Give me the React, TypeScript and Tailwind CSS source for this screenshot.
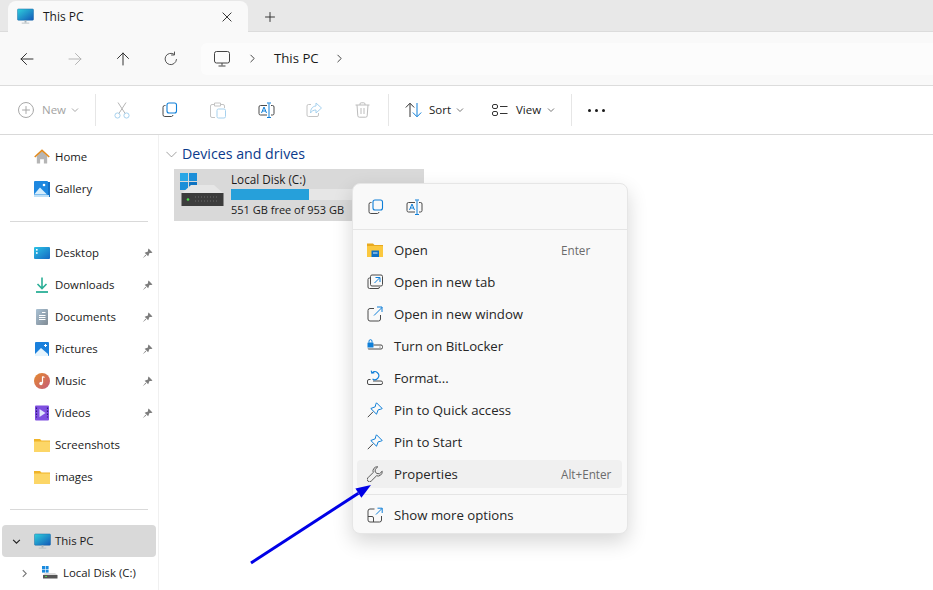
import React from "react";

const font = { fontFamily: '"Open Sans", "Noto Sans", sans-serif' };

const Monitor = ({ s = 18 }: { s?: number }) => (
  <svg width={s} height={s} viewBox="0 0 18 18">
    <defs>
      <linearGradient id="mon" x1="0" y1="0" x2="1" y2="1">
        <stop offset="0" stopColor="#2fd0dc" />
        <stop offset="1" stopColor="#1257b8" />
      </linearGradient>
    </defs>
    <rect x="0.5" y="1" width="17" height="12" rx="1" fill="url(#mon)" stroke="#1a6aa8" strokeWidth="0.5" />
    <rect x="8" y="13" width="2" height="2.5" fill="#a9b4ba" />
    <rect x="5" y="15.5" width="8" height="1" fill="#b8c0c4" />
  </svg>
);

const Line = ({ d, c = "#1a1a1a", s = 16, w = 1 }: { d: string; c?: string; s?: number; w?: number }) => (
  <svg width={s} height={s} viewBox="0 0 16 16" fill="none" stroke={c} strokeWidth={w} strokeLinecap="round" strokeLinejoin="round">
    <path d={d} />
  </svg>
);

const Chev = ({ c = "#777", s = 8 }: { c?: string; s?: number }) => (
  <svg width={s} height={s} viewBox="0 0 8 8" fill="none" stroke={c} strokeWidth="1">
    <path d="M1 2.5 L4 5.5 L7 2.5" />
  </svg>
);

const Copy = () => (
  <svg width="16" height="16" viewBox="0 0 16 16" fill="none">
    <path d="M3.5 3.5 H2.8 A1.8 1.8 0 0 0 1 5.3 V12.7 A1.8 1.8 0 0 0 2.8 14.5 H9.5 A1.8 1.8 0 0 0 11 13" stroke="#4a4a4a" />
    <rect x="5" y="1" width="9.5" height="10" rx="2" stroke="#0f7fd8" strokeWidth="1.1" />
  </svg>
);

const Rename = () => (
  <svg width="17" height="17" viewBox="0 0 17 17" fill="none">
    <path d="M9 3.5 H2.5 A1.5 1.5 0 0 0 1 5 V11.5 A1.5 1.5 0 0 0 2.5 13 H9 M13 3.5 H14.5 A1.5 1.5 0 0 1 16 5 V11.5 A1.5 1.5 0 0 1 14.5 13 H13" stroke="#4a4a4a" />
    <path d="M11 1.5 V15 M9 1 H13 M9 15.5 H13" stroke="#0f7fd8" />
    <path d="M3.5 11 L6 5 L8.5 11 M4.3 9 H7.7" stroke="#0f7fd8" />
  </svg>
);

const Pin = () => (
  <svg width="11" height="11" viewBox="0 0 10 10">
    <path d="M6 0.5 L9.5 4 L8.5 4.5 L6.8 4.6 L5.6 7.6 L2.4 4.4 L5.4 3.2 L5.5 1.5 Z M3.2 6.2 L0.6 9.4 L3.8 6.8 Z" fill="#7d7d7d" />
  </svg>
);

const Folder = () => (
  <svg width="16" height="14" viewBox="0 0 16 14">
    <path d="M0 1 H6 L7.5 2.5 H16 V13 A1 1 0 0 1 15 14 H1 A1 1 0 0 1 0 13 Z" fill="#f0b429" />
    <rect x="0" y="3.5" width="16" height="10.5" rx="0.5" fill="#fcd667" />
  </svg>
);

const sideIcons: Record<string, React.ReactNode> = {
  Home: (
    <svg width="17" height="16" viewBox="0 0 17 16">
      <path d="M3 7 L8.5 2 L14 7 V15 H10.5 V10.5 H6.5 V15 H3 Z" fill="#b5b5b5" />
      <path d="M0.8 8 L8.5 1 L16.2 8" fill="none" stroke="#e08a1e" strokeWidth="1.7" />
    </svg>
  ),
  Gallery: (
    <svg width="16" height="16" viewBox="0 0 16 16">
      <rect x="14" y="1" width="2" height="15" fill="#1570c4" />
      <rect x="0" y="0" width="14" height="14.5" rx="1" fill="#1e88e0" />
      <path d="M0 13.5 L6 6.5 L13 13.5 Z" fill="#d7eefc" />
      <circle cx="10" cy="4" r="1.3" fill="#fff" />
      <rect x="0" y="14" width="15" height="2" fill="#bfe0f6" />
    </svg>
  ),
  Desktop: (
    <svg width="16" height="12" viewBox="0 0 16 12">
      <defs>
        <linearGradient id="desk" x1="0" y1="0" x2="1" y2="1">
          <stop offset="0" stopColor="#2cc3e6" />
          <stop offset="1" stopColor="#1467c2" />
        </linearGradient>
      </defs>
      <rect width="16" height="12" rx="1" fill="url(#desk)" />
      <rect x="2" y="2" width="1.6" height="1.6" fill="#fff" />
      <rect x="2" y="5.2" width="1.6" height="1.6" fill="#fff" />
    </svg>
  ),
  Downloads: (
    <svg width="14" height="16" viewBox="0 0 14 16" fill="none" stroke="#2baf97" strokeWidth="1.6">
      <path d="M7 0.5 V11 M2.5 7 L7 11.5 L11.5 7" />
      <path d="M1 15 H13" strokeWidth="1.8" />
    </svg>
  ),
  Documents: (
    <svg width="12" height="16" viewBox="0 0 12 16">
      <defs>
        <linearGradient id="docs" x1="0" y1="0" x2="1" y2="1">
          <stop offset="0" stopColor="#a9c1d4" />
          <stop offset="1" stopColor="#808b94" />
        </linearGradient>
      </defs>
      <rect width="12" height="16" rx="1" fill="url(#docs)" />
      <path d="M6 3.5 H9.5 M3 6.5 H9.5 M3 8.5 H9.5 M3 10.5 H9.5" stroke="#fff" />
    </svg>
  ),
  Pictures: (
    <svg width="14" height="14" viewBox="0 0 14 14">
      <rect width="14" height="14" rx="1" fill="#1a80dc" />
      <path d="M0 12 L6 6 L13 12 V14 H0 Z" fill="#e6f4fd" />
      <path d="M10.5 2 v3 M9 3.5 h3" stroke="#fff" />
    </svg>
  ),
  Music: (
    <svg width="16" height="16" viewBox="0 0 16 16">
      <defs>
        <linearGradient id="mus" x1="0" y1="0" x2="1" y2="1">
          <stop offset="0" stopColor="#e58a2e" />
          <stop offset="1" stopColor="#c55a7a" />
        </linearGradient>
      </defs>
      <circle cx="8" cy="8" r="8" fill="url(#mus)" />
      <path d="M8.5 3.5 L10.5 4.5 M8.5 3.5 V10" stroke="#fff" strokeWidth="1.2" />
      <circle cx="7" cy="10.5" r="1.7" fill="#fff" />
    </svg>
  ),
  Videos: (
    <svg width="14" height="16" viewBox="0 0 14 16">
      <rect width="14" height="15" y="0.5" rx="1" fill="#7e4fe0" />
      <path d="M4.5 4 L10.5 8 L4.5 12 Z" fill="#dfe6fb" />
      <path d="M1.5 2.5 v10 M12.5 2.5 v10" stroke="#2d1a78" strokeWidth="1.2" strokeDasharray="1.5 1.5" />
    </svg>
  ),
  Screenshots: <Folder />,
  images: <Folder />,
};

const SideRow = ({ name, pin }: { name: string; pin?: boolean }) => (
  <div className="flex h-8 items-center text-[11.4px] text-[#1a1a1a]">
    <div className="ml-[34px] flex w-4 justify-center">{sideIcons[name]}</div>
    <span className="ml-[5px]">{name}</span>
    {pin && (
      <span className="ml-auto mr-[5px] flex">
        <Pin />
      </span>
    )}
  </div>
);

const WinLogo = ({ s = 17 }: { s?: number }) => (
  <svg width={s} height={s} viewBox="0 0 17 17">
    <rect width="8" height="8" fill="#28a6e6" />
    <rect x="9" width="8" height="8" fill="#1b8ed8" />
    <rect y="9" width="8" height="8" fill="#1b8ed8" />
    <rect x="9" y="9" width="8" height="8" fill="#0f74c2" />
  </svg>
);

const menuIcons = {
  open: (
    <svg width="16" height="14" viewBox="0 0 16 14">
      <path d="M0 0.5 H6 L7.5 2 H16 V13 A1 1 0 0 1 15 14 H1 A1 1 0 0 1 0 13 Z" fill="#e8a91f" />
      <rect x="0" y="3" width="16" height="11" rx="0.5" fill="#fbc83f" />
      <rect x="4.5" y="7.5" width="7.5" height="6.5" fill="#0f70c4" />
      <rect x="6" y="9.5" width="4.5" height="1" fill="#d9edfb" />
    </svg>
  ),
  tab: (
    <svg width="16" height="16" viewBox="0 0 16 16" fill="none">
      <rect x="3.5" y="1" width="12" height="11" rx="1.5" stroke="#4a4a4a" />
      <path d="M3 4 H2.5 A1.5 1.5 0 0 0 1 5.5 V13 A1.5 1.5 0 0 0 2.5 14.5 H11 A1.5 1.5 0 0 0 12.5 13" stroke="#4a4a4a" />
      <path d="M7.5 9 L12.5 4 M8.5 3.5 H13 V8" stroke="#0f7fd8" />
    </svg>
  ),
  window: (
    <svg width="16" height="16" viewBox="0 0 16 16" fill="none">
      <path d="M7 2.5 H3 A2 2 0 0 0 1 4.5 V13 A2 2 0 0 0 3 15 H11.5 A2 2 0 0 0 13.5 13 V9" stroke="#4a4a4a" />
      <path d="M7 9.5 L15 1.5 M10 1 H15 V6" stroke="#0f7fd8" />
    </svg>
  ),
  bit: (
    <svg width="16" height="16" viewBox="0 0 16 16" fill="none">
      <rect x="0.5" y="4.5" width="6" height="5" rx="0.5" fill="#0f7fd8" />
      <path d="M2 4.5 V3.2 A1.5 1.5 0 0 1 5 3.2 V4.5" stroke="#0f7fd8" />
      <path d="M6.5 7 H14 A1.5 1.5 0 0 1 15.5 8.5 V9.5 A1.5 1.5 0 0 1 14 11 H2 A1.5 1.5 0 0 1 0.8 10.4" stroke="#4a4a4a" />
      <circle cx="13" cy="9" r="0.6" fill="#4a4a4a" />
    </svg>
  ),
  format: (
    <svg width="16" height="16" viewBox="0 0 16 16" fill="none">
      <path d="M3.5 9.5 H2 A1.5 1.5 0 0 0 0.5 11 V13 A1.5 1.5 0 0 0 2 14.5 H14 A1.5 1.5 0 0 0 15.5 13 V12.5 A1.5 1.5 0 0 0 14 11 H6" stroke="#4a4a4a" />
      <path d="M5 2.8 A4 4 0 1 1 5.5 9 M4.2 0.6 L4.8 3.2 L7.4 2.6" stroke="#0f7fd8" strokeWidth="1.1" />
    </svg>
  ),
  pin: (
    <svg width="16" height="16" viewBox="0 0 16 16" fill="none">
      <path d="M9.5 0.8 L15.2 6.5 L13.8 7.2 L11.2 7.8 L9.5 12.2 L3.8 6.5 L8.2 4.8 L8.8 2.2 Z" stroke="#0f7fd8" />
      <path d="M6 9.8 L0.8 15.2" stroke="#4a4a4a" />
    </svg>
  ),
  wrench: (
    <svg width="16" height="16" viewBox="0 0 16 16" fill="none" stroke="#5a5a5a">
      <path d="M10.8 0.8 A4.3 4.3 0 0 0 6.2 6.5 L0.9 11.8 A2.3 2.3 0 0 0 4.2 15.1 L9.5 9.8 A4.3 4.3 0 0 0 15.2 5.2 L12.5 7.8 L10 7.5 L8.2 6 L8.2 3.4 Z" />
    </svg>
  ),
  more: (
    <svg width="16" height="16" viewBox="0 0 16 16" fill="none">
      <path d="M7.5 2 H3 A2 2 0 0 0 1 4 V13 A2 2 0 0 0 3 15 H12.5 A2 2 0 0 0 14.5 13 V9 M1 9.5 H5 A1.5 1.5 0 0 1 6.5 11 V15" stroke="#4a4a4a" />
      <path d="M9 7.5 L15 1.5 M10.5 1.2 H15.2 V6" stroke="#0f7fd8" />
    </svg>
  ),
};

const MenuItem = ({ icon, label, kbd, hl }: { icon: React.ReactNode; label: string; kbd?: string; hl?: boolean }) => (
  <div className="ml-[4px] mr-[5px] flex h-8 items-center">
    <div className={`flex h-7 w-full items-center rounded ${hl ? "bg-[#f0f0f0]" : ""}`}>
      <div className="ml-[10px] flex w-4 justify-center">{icon}</div>
      <span className="ml-[11px] mt-px text-[13.2px] text-[#262626]">{label}</span>
      {kbd && <span className="ml-auto mt-px w-[61px] shrink-0 text-[11.7px] text-[#6b6b6b]">{kbd}</span>}
    </div>
  </div>
);

const ToolBtn = ({ children }: { children: React.ReactNode }) => (
  <div className="flex h-8 w-12 items-center justify-center">{children}</div>
);

const Sep = () => <div className="h-8 w-px bg-[#e6e6e6]" />;

function ToolIcon({ children }: { children: React.ReactNode }) {
  return <div className="flex w-[17px] items-center justify-center">{children}</div>;
}

export default function App() {
  return (
    <div style={font} className="relative flex h-[590px] w-full flex-col overflow-hidden bg-white">
      {/* Tab strip */}
      <div className="flex h-8 shrink-0 items-end border-b border-[#dcdcdc] bg-[#e8e8e8] pl-2">
        <div className="-mb-px flex h-[31px] w-[240px] items-center rounded-t-lg bg-[#f9f9f9] pl-[9px]">
          <Monitor s={17} />
          <span className="ml-[9px] text-[12px] text-[#1a1a1a]">This PC</span>
          <span className="ml-auto mr-[15px]">
            <Line s={12} d="M2.5 2.5 L13.5 13.5 M13.5 2.5 L2.5 13.5" c="#333" w={1.3} />
          </span>
        </div>
        <div className="mb-[8px] ml-4 flex w-[12px] items-center">
          <Line s={12} d="M8 2 V14 M2 8 H14" c="#333" w={1.3} />
        </div>
      </div>

      {/* Address row */}
      <div className="flex h-[54px] shrink-0 items-center border-b border-[#dcdcdc] bg-[#f9f9f9] pl-[3px]">
        <ToolBtn><Line d="M14 8 H2 M7.5 2.5 L2 8 L7.5 13.5" c="#333" /></ToolBtn>
        <ToolBtn><Line d="M2 8 H14 M8.5 2.5 L14 8 L8.5 13.5" c="#b5b5b5" /></ToolBtn>
        <ToolBtn><Line d="M8 14 V2 M2.5 7.5 L8 2 L13.5 7.5" c="#333" /></ToolBtn>
        <ToolBtn><Line d="M13.5 8.5 A5.7 5.7 0 1 1 11 3.2 M11.5 1 V4 H8.5" c="#555" /></ToolBtn>
        <div className="ml-[6px] flex h-8 flex-1 items-center rounded-l-md bg-[#fcfcfc] pl-[13px] text-[13.2px] text-[#1a1a1a]">
          <svg width="16" height="16" viewBox="0 0 16 16" fill="none" stroke="#444">
            <rect x="0.5" y="0.5" width="15" height="11.5" rx="2" />
            <path d="M8 12 V14.5 M4.5 15 H11.5" />
          </svg>
          <span className="ml-[18px] flex"><Line s={9} d="M5 2 L11 8 L5 14" c="#333" w={1.6} /></span>
          <span className="ml-[17px]">This PC</span>
          <span className="ml-[16px] flex"><Line s={9} d="M5 2 L11 8 L5 14" c="#333" w={1.6} /></span>
        </div>
      </div>

      {/* Command bar */}
      <div className="flex h-[49px] shrink-0 items-center border-b border-[#d9d9d9] bg-white">
        <div className="flex w-[95px] items-center pl-[18px]">
          <Line d="M8 4.5 V11.5 M4.5 8 H11.5 M15.5 8 A7.5 7.5 0 1 1 0.5 8 A7.5 7.5 0 1 1 15.5 8" c="#a8a8a8" />
          <span className="ml-2 text-[11.5px] text-[#a3a3a3]">New</span>
          <span className="ml-[5px]"><Chev c="#a8a8a8" /></span>
        </div>
        <Sep />
        <div className="ml-[2px] flex">
          <ToolBtn>
            <svg width="16" height="17" viewBox="0 0 16 17" fill="none" stroke="#a6d1ee">
              <circle cx="3.5" cy="13.5" r="2.6" />
              <circle cx="12.5" cy="13.5" r="2.6" />
              <path d="M5 11.3 L12 0.5 M11 11.3 L4 0.5" stroke="#b5b5b5" />
            </svg>
          </ToolBtn>
          <ToolBtn><Copy /></ToolBtn>
          <ToolBtn>
            <svg width="16" height="17" viewBox="0 0 16 17" fill="none">
              <path d="M4 2.5 H2 A1.5 1.5 0 0 0 0.5 4 V14 A1.5 1.5 0 0 0 2 15.5 H5 M11 2.5 H13 A1.5 1.5 0 0 1 14.5 4 V6 M4.5 1 H10.5 V4 H4.5 Z" stroke="#c4c4c4" />
              <rect x="7" y="7" width="8.5" height="9" rx="1.5" stroke="#a6d1ee" />
            </svg>
          </ToolBtn>
          <ToolBtn><Rename /></ToolBtn>
          <ToolBtn>
            <svg width="16" height="16" viewBox="0 0 16 16" fill="none">
              <path d="M5 2.5 H2.5 A1.5 1.5 0 0 0 1 4 V13 A1.5 1.5 0 0 0 2.5 14.5 H11 A1.5 1.5 0 0 0 12.5 13 V11" stroke="#c4c4c4" />
              <path d="M10 1 L15.5 6 L10 11 V8 C7.5 8 5.5 9 4.5 11 C4.5 7 6.5 4.2 10 4 Z" stroke="#a6d1ee" />
            </svg>
          </ToolBtn>
          <ToolBtn>
            <svg width="15" height="16" viewBox="0 0 15 16" fill="none" stroke="#bcbcbc">
              <path d="M0.5 3 H14.5 M5 3 V2 A1.2 1.2 0 0 1 6.2 0.8 H8.8 A1.2 1.2 0 0 1 10 2 V3 M2 3 L2.8 13.8 A1.5 1.5 0 0 0 4.3 15.2 H10.7 A1.5 1.5 0 0 0 12.2 13.8 L13 3 M6 6 V12 M9 6 V12" />
            </svg>
          </ToolBtn>
        </div>
        <div className="ml-[2px]"><Sep /></div>
        <div className="ml-4 flex w-[66px] items-center text-[11.5px] text-[#1a1a1a]">
          <svg width="17" height="16" viewBox="0 0 17 16" fill="none">
            <path d="M5 15 V1.5 M0.8 5.5 L5 1.2 L9.2 5.5" stroke="#333" />
            <path d="M12 1 V14.5 M7.8 10.5 L12 14.8 L16.2 10.5" stroke="#0f7fd8" />
          </svg>
          <span className="ml-[7px]">Sort</span>
          <span className="ml-[5px]"><Chev /></span>
        </div>
        <div className="ml-[21px] flex w-[79px] items-center text-[11.5px] text-[#1a1a1a]">
          <svg width="16" height="12" viewBox="0 0 16 12" fill="none" stroke="#333">
            <rect x="0.5" y="0.5" width="5" height="4" rx="1.5" />
            <rect x="0.5" y="7.5" width="5" height="4" rx="1.5" />
            <path d="M8 2.5 H15.5 M8 9.5 H15.5" />
          </svg>
          <span className="ml-2">View</span>
          <span className="ml-[6px]"><Chev /></span>
        </div>
        <Sep />
        <div className="ml-4 flex gap-[4px]">
          <span className="h-[3px] w-[3px] rounded-full bg-[#1a1a1a]" />
          <span className="h-[3px] w-[3px] rounded-full bg-[#1a1a1a]" />
          <span className="h-[3px] w-[3px] rounded-full bg-[#1a1a1a]" />
        </div>
      </div>

      {/* Body */}
      <div className="flex min-h-0 flex-1">
        <aside className="w-[159px] shrink-0 border-r border-[#f0f0f0] pt-[6px]">
          <SideRow name="Home" />
          <SideRow name="Gallery" />
          <div className="mx-[10px] mb-[15px] mt-4 h-px w-[138px] bg-[#d9d9d9]" />
          <SideRow name="Desktop" pin />
          <SideRow name="Downloads" pin />
          <SideRow name="Documents" pin />
          <SideRow name="Pictures" pin />
          <SideRow name="Music" pin />
          <SideRow name="Videos" pin />
          <SideRow name="Screenshots" />
          <SideRow name="images" />
          <div className="mx-[10px] mb-[15px] mt-4 h-px w-[138px] bg-[#d9d9d9]" />
          <div className="mx-[2px] flex h-8 w-[154px] items-center rounded bg-[#d9d9d9] text-[11.4px] text-[#1a1a1a]">
            <span className="ml-[10px]"><Chev c="#222" s={9} /></span>
            <span className="ml-[13px] flex"><Monitor s={17} /></span>
            <span className="ml-[4px]">This PC</span>
          </div>
          <div className="flex h-8 items-center text-[11.4px] text-[#1a1a1a]">
            <span className="ml-5 flex -rotate-90"><Chev c="#777" s={9} /></span>
            <span className="ml-[13px] flex">
              <svg width="16" height="14" viewBox="0 0 16 14">
                <rect x="0" y="0" width="3" height="3" fill="#1a8ade" />
                <rect x="3.6" y="0" width="3" height="3" fill="#1a8ade" />
                <rect x="0" y="3.6" width="3" height="3" fill="#1a8ade" />
                <rect x="3.6" y="3.6" width="3" height="3" fill="#1a8ade" />
                <path d="M1 9 L3 7 H13 L15.5 9 Z" fill="#dcdcdc" />
                <rect x="1" y="9" width="14.5" height="3.5" fill="#555" />
                <rect x="3" y="10" width="2" height="1" fill="#4ed04e" />
              </svg>
            </span>
            <span className="ml-[5px]">Local Disk (C:)</span>
          </div>
        </aside>

        <main className="min-w-0 flex-1 pt-[9px]">
          <div className="flex h-[20px] items-center pl-[7px]">
            <Line s={11} d="M1 4.5 L8 11.5 L15 4.5" c="#777" />
            <span className="ml-[5px] text-[14.2px] text-[#0a3a8c]">Devices and drives</span>
          </div>
          <div className="ml-[15px] mt-[5px] flex h-[52px] w-[250px] bg-[#d9d9d9]">
            <div className="relative ml-[6px] w-[44px]">
              <div className="absolute left-0 top-[4px] flex"><WinLogo /></div>
              <svg className="absolute left-px top-[16px]" width="43" height="22" viewBox="0 0 43 22">
                <path d="M1 8 L10 0 H33 L42 8 Z" fill="#e6e6e6" />
                <rect x="0.5" y="8" width="42" height="13" fill="#3c3c3c" />
                <circle cx="7" cy="14.5" r="1.3" fill="#4ee04e" />
                <path d="M14 12 H38 M14 16 H38" stroke="#6b6b6b" strokeDasharray="1 2" />
              </svg>
            </div>
            <div className="ml-[7px] flex-1 pr-[7px] text-[#1a1a1a]">
              <div className="mt-[2px] h-4 text-[11.7px] leading-4">Local Disk (C:)</div>
              <div className="mt-[2px] h-[11px] w-full bg-[#e6e6e6]">
                <div className="h-full bg-[#26a0da]" style={{ width: "42%" }} />
              </div>
              <div className="mt-[2px] h-4 text-[11px] leading-4">551 GB free of 953 GB</div>
            </div>
          </div>
        </main>
      </div>

      {/* Context menu */}
      <div className="absolute left-[352px] top-[183px] w-[276px] rounded-lg border border-[#e6e6e6] bg-[#f9f9f9] shadow-[0_8px_20px_rgba(0,0,0,0.16)]">
        <div className="flex h-[46px] items-center gap-[22px] border-b border-[#e5e5e5] pl-[14px] pt-px">
          <ToolIcon><Copy /></ToolIcon>
          <ToolIcon><Rename /></ToolIcon>
        </div>
        <div className="pt-1">
          <MenuItem icon={menuIcons.open} label="Open" kbd="Enter" />
          <MenuItem icon={menuIcons.tab} label="Open in new tab" />
          <MenuItem icon={menuIcons.window} label="Open in new window" />
          <MenuItem icon={menuIcons.bit} label="Turn on BitLocker" />
          <MenuItem icon={menuIcons.format} label="Format..." />
          <MenuItem icon={menuIcons.pin} label="Pin to Quick access" />
          <MenuItem icon={menuIcons.pin} label="Pin to Start" />
          <MenuItem icon={menuIcons.wrench} label="Properties" kbd="Alt+Enter" hl />
        </div>
        <div className="mt-1 h-px bg-[#e5e5e5]" />
        <div className="mb-[2px] mt-1">
          <MenuItem icon={menuIcons.more} label="Show more options" />
        </div>
      </div>

      {/* Annotation arrow */}
      <svg className="absolute left-[245px] top-[478px]" width="130" height="90" viewBox="0 0 130 90">
        <path d="M6 85 L113.4 15.2" stroke="#0000e6" strokeWidth="3" />
        <path d="M126 7 L110.4 10.6 L116.4 19.8 Z" fill="#0000e6" />
      </svg>
    </div>
  );
}
